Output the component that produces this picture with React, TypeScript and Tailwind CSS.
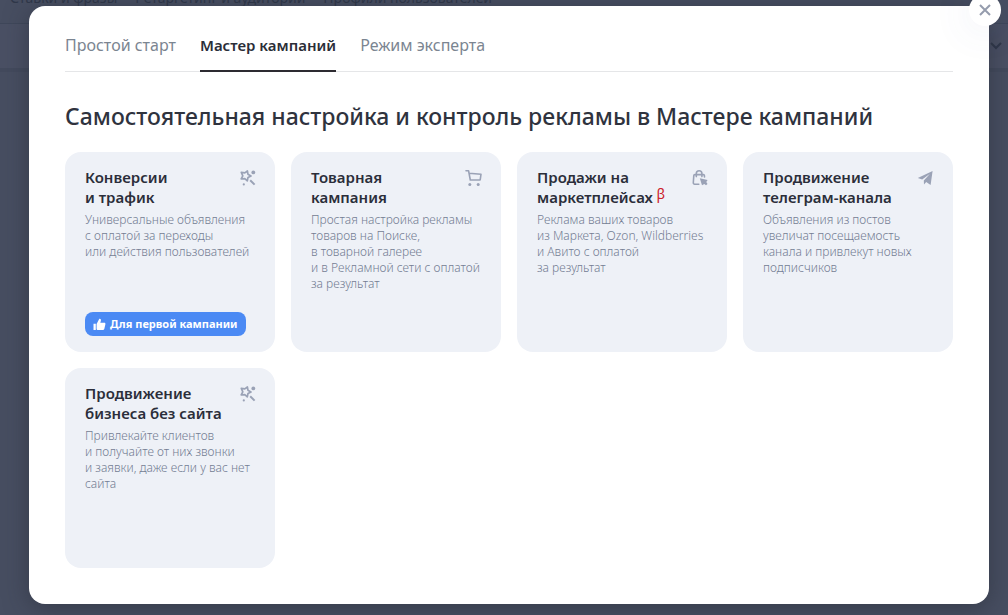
import React from "react";

const tabs = ["Простой старт", "Мастер кампаний", "Режим эксперта"];

function WandIcon() {
  return (
    <svg width="18" height="18" viewBox="0 0 18 18" fill="none" stroke="currentColor">
      <path
        d="M2.3 3.3 5.8 3.9 8.4 2 8.9 5.2 12 7 9 8.500 8.300 11.800 5.800 9.600 2.200 10 3.800 6.800Z"
        strokeWidth="1.7"
        strokeLinejoin="round"
      />
      <path d="m11.200 11.200 4.400 4.400" strokeWidth="2" />
      <circle cx="14.300" cy="3.400" r="1.900" fill="currentColor" stroke="none" />
      <circle cx="4.800" cy="15.400" r="1.100" fill="currentColor" stroke="none" />
    </svg>
  );
}

function CartIcon() {
  return (
    <svg width="18" height="18" viewBox="0 0 18 18" fill="none" stroke="currentColor">
      <path
        d="M1 1.800h2.600l1.700 9.200h9.600M4 4.200l12 1-.8 5.600"
        strokeWidth="1.600"
        strokeLinejoin="round"
        strokeLinecap="round"
      />
      <circle cx="4.800" cy="15.600" r="1.500" fill="currentColor" stroke="none" />
      <circle cx="13.200" cy="15.600" r="1.500" fill="currentColor" stroke="none" />
    </svg>
  );
}

function BagIcon() {
  return (
    <svg width="18" height="18" viewBox="0 0 18 18" fill="none" stroke="currentColor">
      <path
        d="M7.800 15.200H3.600a1.300 1.300 0 0 1-1.300-1.400l.5-7.300a1 1 0 0 1 1-.9h8.600a1 1 0 0 1 1 .9l.1 1.500M5.300 7.600V4.600a2.800 2.800 0 0 1 5.600 0V7.600"
        strokeWidth="1.600"
        strokeLinecap="round"
        strokeLinejoin="round"
      />
      <path d="m8.800 9.200 7.800 1.800-1.300 1.900 1.200 2-1.500 1.300-1.700-1.300-2.300 1.300Z" fill="currentColor" stroke="none" />
    </svg>
  );
}

function PlaneIcon() {
  return (
    <svg width="18" height="18" viewBox="0 0 18 18" fill="currentColor">
      <path d="M15.600 2 .8 9l4.400 1.600L13 4.800 6.800 11.400l.2 4 2.200-2.500 4.400 3Z" />
    </svg>
  );
}

function ThumbIcon() {
  return (
    <svg width="13" height="13" viewBox="0 0 13 13" fill="currentColor">
      <path d="M.5 5.800h2.300v6.200H.5zM3.600 5.900 6.300.8c1.300-.2 1.900.8 1.600 1.900l-.6 2h4c.9 0 1.300.7 1.100 1.500l-1.100 4.700c-.2.700-.7 1.100-1.400 1.100H5c-.8 0-1.400-.4-1.400-1.200Z" />
    </svg>
  );
}

const cards = [
  {
    title: "Конверсии\nи трафик",
    text: "Универсальные объявления\nс оплатой за переходы\nили действия пользователей",
    icon: WandIcon,
    badge: "Для первой кампании",
  },
  {
    title: "Товарная\nкампания",
    text: "Простая настройка рекламы\nтоваров на Поиске,\nв товарной галерее\nи в Рекламной сети с оплатой\nза результат",
    icon: CartIcon,
  },
  {
    title: "Продажи на\nмаркетплейсах",
    text: "Реклама ваших товаров\nиз Маркета, Ozon, Wildberries\nи Авито с оплатой\nза результат",
    icon: BagIcon,
    beta: true,
  },
  {
    title: "Продвижение\nтелеграм-канала",
    text: "Объявления из постов\nувеличат посещаемость\nканала и привлекут новых\nподписчиков",
    icon: PlaneIcon,
  },
  {
    title: "Продвижение\nбизнеса без сайта",
    text: "Привлекайте клиентов\nи получайте от них звонки\nи заявки, даже если у вас нет\nсайта",
    icon: WandIcon,
  },
];

function Backdrop() {
  return (
    <div className="absolute inset-0 overflow-hidden text-[#30384a]" aria-hidden="true">
      <div className="-mt-3 flex h-9 gap-[18px] border-b border-[#3f475a] px-2.5 text-sm leading-5">
        <span>Ставки и фразы</span>
        <span>Ретаргетинг и аудитории</span>
        <span>Профили пользователей</span>
      </div>
      <div className="flex h-12 items-center justify-end border-b-4 border-[#434a5d] bg-[#4a5064] px-1.5">
        <svg width="12" height="8" viewBox="0 0 12 8" fill="none" stroke="currentColor" strokeWidth="2">
          <path d="m1 1 5 5 5-5" />
        </svg>
      </div>
    </div>
  );
}

function App() {
  return (
    <div className="relative min-h-screen bg-[#474e61] pt-1.5 pr-[19px] pb-[11px] pl-[29px] font-['Noto_Sans',sans-serif]">
      <Backdrop />
      <div
        role="dialog"
        aria-labelledby="dialog-title"
        className="relative rounded-2xl bg-white px-9 pt-[27px] pb-9 shadow-[0_4px_24px_rgba(35,40,50,0.5)]"
      >
        <button
          type="button"
          aria-label="Закрыть"
          className="absolute -top-3 -right-3 flex size-8 items-center justify-center rounded-full bg-white text-[#959cad] shadow-[0_4px_40px_rgba(80,90,160,0.12)]"
        >
          <svg width="12" height="12" viewBox="0 0 12 12" fill="none" stroke="currentColor" strokeWidth="2">
            <path d="m1 1 10 10M11 1 1 11" />
          </svg>
        </button>

        <div role="tablist" className="flex gap-6 border-b border-[#e5e6e8]">
          {tabs.map((tab, i) => (
            <button
              key={tab}
              type="button"
              role="tab"
              aria-selected={i === 1}
              className={
                i === 1
                  ? "-mb-px border-b-2 border-[#2d2b31] pb-[13px] text-[15px] leading-6 font-semibold text-[#2b2e38]"
                  : "-mb-px border-b-2 border-transparent pb-[13px] text-base leading-6 text-[#7b8591]"
              }
            >
              {tab}
            </button>
          ))}
        </div>

        <h1 id="dialog-title" className="mt-7 text-[23px] leading-8 font-medium text-[#2f333e]">
          Самостоятельная настройка и контроль рекламы в Мастере кампаний
        </h1>

        <div className="mt-5 grid grid-cols-4 gap-4">
          {cards.map(({ title, text, icon: Icon, badge, beta }) => (
            <button
              key={title}
              type="button"
              className="relative flex min-h-50 flex-col items-start rounded-2xl bg-[#eef1f7] px-5 pt-[15px] pb-4 text-left"
            >
              <span className="text-[15px] leading-5 font-semibold whitespace-pre text-[#2b2e3a]">
                {title}
                {beta && <sup className="-top-1 text-sm leading-none font-normal text-[#cc2229]"> β</sup>}
              </span>
              <span className="mt-[5px] text-xs leading-4 font-light whitespace-pre text-[#747d93]">{text}</span>
              {badge && (
                <span className="mt-auto flex h-6 items-center gap-1 rounded-lg bg-[#4b8af4] px-2 text-[11px] font-bold text-white">
                  <ThumbIcon />
                  {badge}
                </span>
              )}
              <span className="absolute top-[17px] right-[18px] text-[#9aa2b6]">
                <Icon />
              </span>
            </button>
          ))}
        </div>
      </div>
    </div>
  );
}

export default App;
